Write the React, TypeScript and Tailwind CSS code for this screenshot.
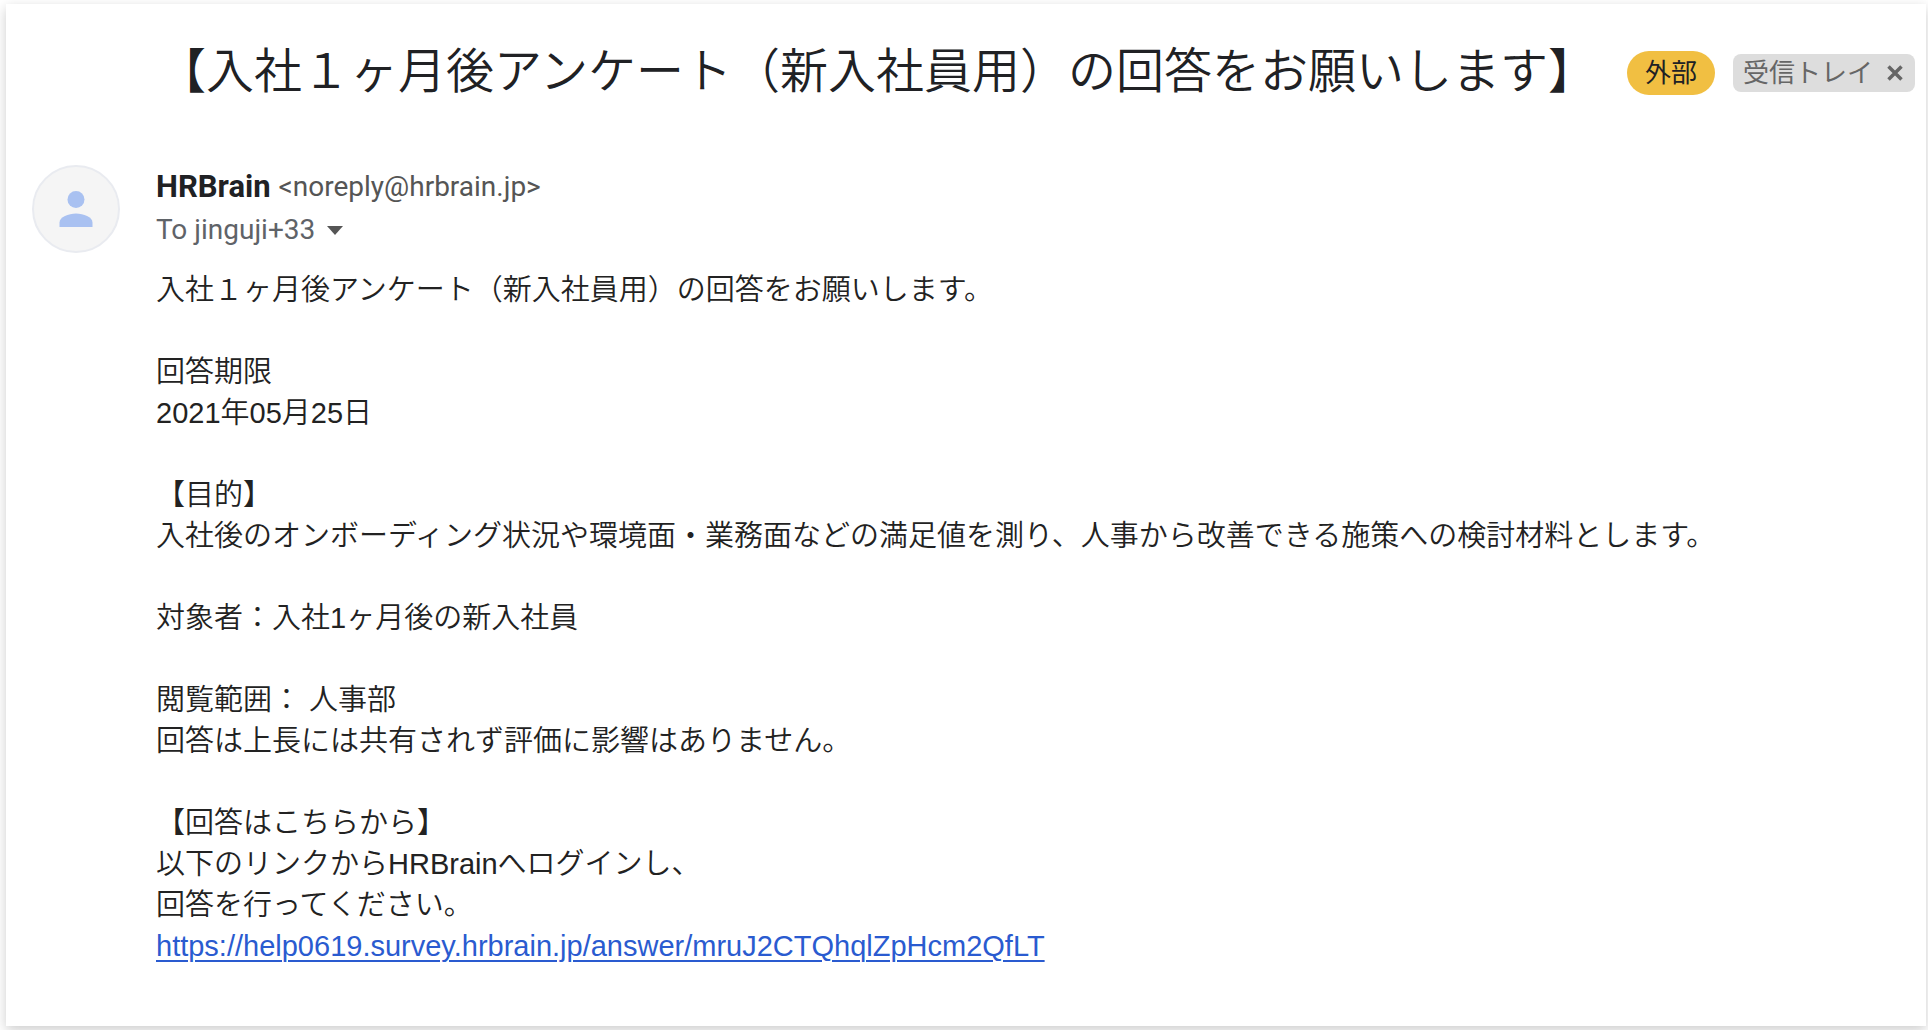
import type { ReactNode } from 'react';

interface SectionProps {
  children: ReactNode;
}

const surveyUrl = 'https://help0619.survey.hrbrain.jp/answer/mruJ2CTQhqlZpHcm2QfLT';

function Section({ children }: SectionProps) {
  return <p className="mb-[41px] last:mb-0">{children}</p>;
}

function Avatar() {
  return (
    <div className="flex size-[88px] shrink-0 items-center justify-center rounded-full border-2 border-[#e9ebf0] bg-[#f5f5f5]">
      <svg viewBox="0 0 34 36" className="h-9 w-[34px]" fill="#a9c1f1" aria-hidden="true">
        <circle cx="17" cy="8.500" r="8.500" />
        <path d="M0.500 36v-4.500C0.500 26 9.500 22.500 17 22.500S33.500 26 33.500 31.500V36z" />
      </svg>
    </div>
  );
}

function SubjectBar() {
  return (
    <div className="flex items-center pr-[11px] pl-[152px]">
      <h1 className="text-[48px] leading-[64px] font-[350] whitespace-nowrap text-[#202124]">
        【入社１ヶ月後アンケート（新入社員用）の回答をお願いします】
      </h1>
      <div className="ml-auto flex shrink-0 items-center gap-[18px] pt-0.5 text-[26px] whitespace-nowrap">
        <span className="flex h-11 items-center rounded-full bg-[#f1bf42] px-[18px] text-[#202124]">外部</span>
        <span className="flex h-[38px] items-center rounded-lg bg-[#ddd] pr-3 pl-2.5 text-[#666]">
          受信トレイ
          <button type="button" aria-label="ラベルを削除" className="ml-3.5">
            <svg viewBox="0 0 16 16" className="size-4" stroke="#666" strokeWidth="3.500" aria-hidden="true">
              <path d="M1.500 1.500l13 13M14.500 1.500l-13 13" />
            </svg>
          </button>
        </span>
      </div>
    </div>
  );
}

function Sender() {
  return (
    <div className="font-['Roboto','Noto_Sans_CJK_JP',sans-serif]">
      <div className="flex items-center gap-2 leading-[44px]">
        <span className="text-[31px] font-bold text-[#202124]">HRBrain</span>
        <span className="text-[28px] text-[#555]">&lt;noreply@hrbrain.jp&gt;</span>
      </div>
      <button type="button" className="flex items-center gap-3 text-[28px] leading-[42px] text-[#5f6368]">
        To jinguji+33
        <svg viewBox="0 0 16 9" className="h-[9px] w-4" fill="#555" aria-hidden="true">
          <path d="M0 0h16L8 9z" />
        </svg>
      </button>
    </div>
  );
}

export default function App() {
  return (
    <div className="min-h-screen bg-white pt-1 pr-0.5 pb-1 pl-1.5 font-['Liberation_Sans','Noto_Sans_CJK_JP',sans-serif]">
      <main className="min-h-[calc(100vh-8px)] bg-white pt-9 pb-10 shadow-[0_4px_12px_rgba(0,0,0,0.2)]">
        <SubjectBar />
        <article className="mt-[61px] flex gap-9 pr-8 pl-[26px]">
          <Avatar />
          <div>
            <Sender />
            <div className="mt-[19px] text-[29px] leading-[41px] font-[350] text-[#222]">
              <Section>入社１ヶ月後アンケート（新入社員用）の回答をお願いします。</Section>
              <Section>
                回答期限
                <br />
                2021年05月25日
              </Section>
              <Section>
                【目的】
                <br />
                入社後のオンボーディング状況や環境面・業務面などの満足値を測り、人事から改善できる施策への検討材料とします。
              </Section>
              <Section>対象者：入社1ヶ月後の新入社員</Section>
              <Section>
                閲覧範囲： 人事部
                <br />
                回答は上長には共有されず評価に影響はありません。
              </Section>
              <Section>
                【回答はこちらから】
                <br />
                以下のリンクからHRBrainへログインし、
                <br />
                回答を行ってください。
                <br />
                <a href={surveyUrl} className="text-[#2a5bd0] underline decoration-2 underline-offset-4">
                  {surveyUrl}
                </a>
              </Section>
            </div>
          </div>
        </article>
      </main>
    </div>
  );
}
